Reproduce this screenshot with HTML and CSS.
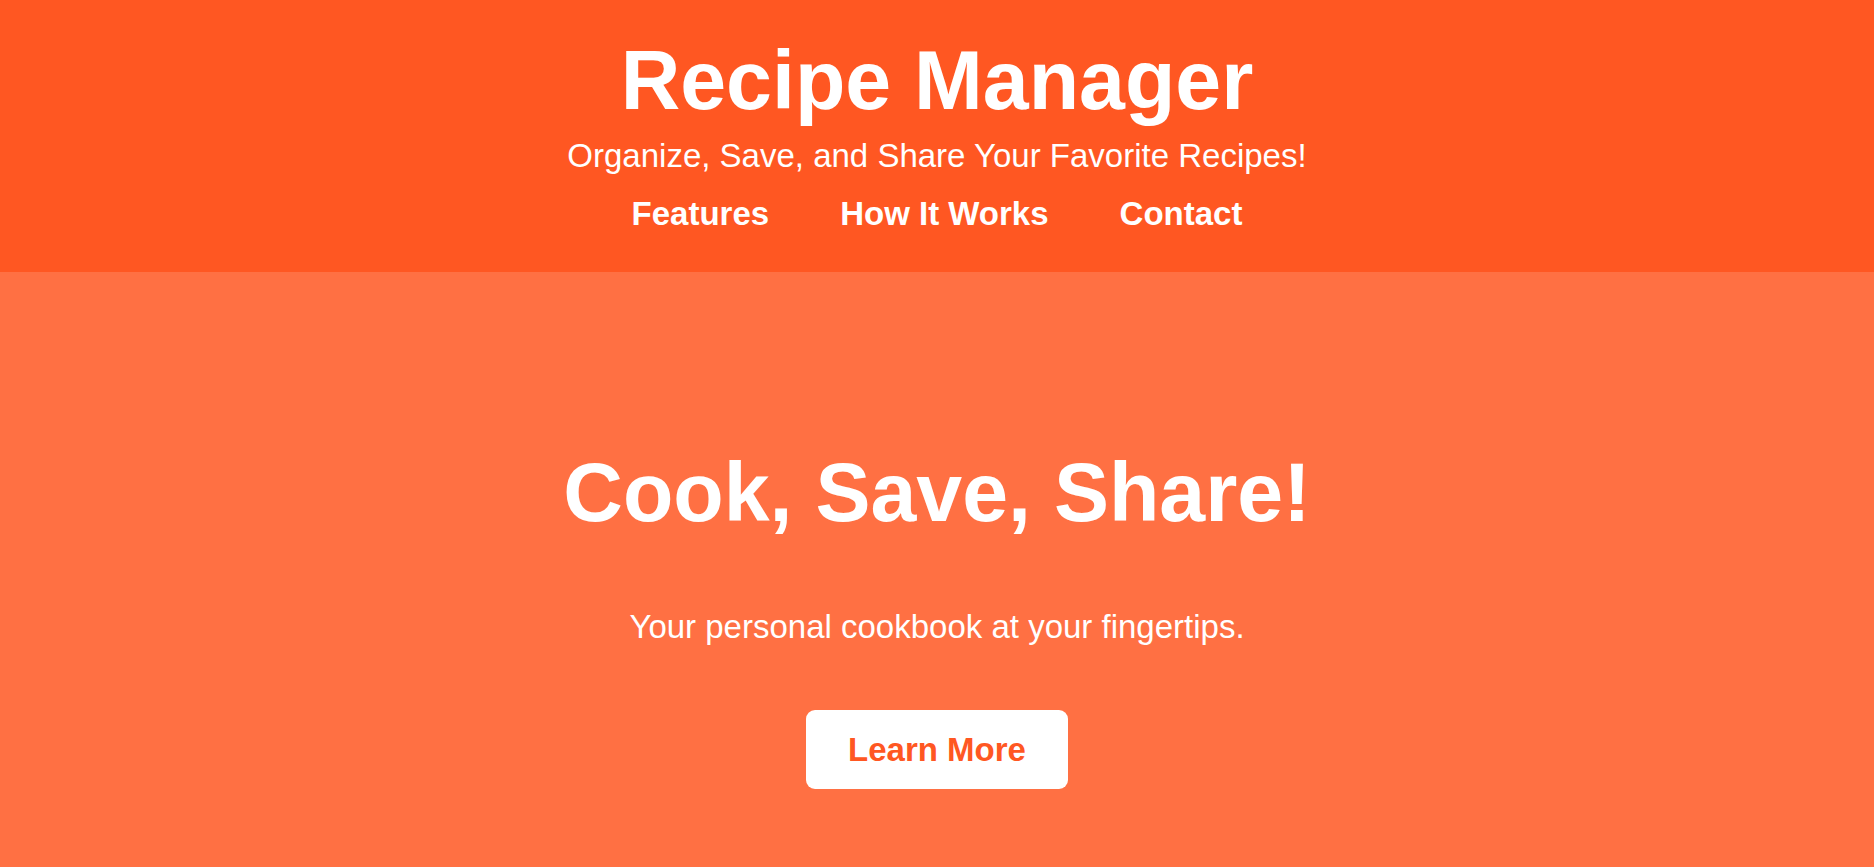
FILE: index.html
```html
<!DOCTYPE html>
<html lang="en">
<head>
<meta charset="utf-8">
<title>Recipe Manager</title>
<link rel="stylesheet" href="styles.css">
</head>
<body>
<header class="site-header">
  <h1 class="site-title">Recipe Manager</h1>
  <p class="site-tagline">Organize, Save, and Share Your Favorite Recipes!</p>
  <nav class="site-nav">
    <a href="#features">Features</a>
    <a href="#how">How It Works</a>
    <a href="#contact">Contact</a>
  </nav>
</header>
<section class="hero">
  <h2 class="hero-title">Cook, Save, Share!</h2>
  <p class="hero-text">Your personal cookbook at your fingertips.</p>
  <a class="hero-button" href="#features">Learn More</a>
</section>
</body>
</html>
```

FILE: styles.css
```css
html, body {
  margin: 0;
  padding: 0;
}
body {
  font-family: "Liberation Sans", Arial, sans-serif;
  background: #FF7043;
  color: #fff;
}
.site-header {
  background: #FF5722;
  text-align: center;
  padding: 33px 20px 40px;
}
.site-title {
  margin: 0;
  font-size: 82.5px;
  line-height: 94px;
  font-weight: 700;
}
.site-tagline {
  margin: 10px 0 0;
  font-size: 33px;
  line-height: 37px;
}
.site-nav {
  margin-top: 21px;
  display: flex;
  justify-content: center;
  gap: 71px;
}
.site-nav a {
  color: #fff;
  text-decoration: none;
  font-weight: 700;
  font-size: 33px;
  line-height: 37px;
}
.hero {
  background: #FF7043;
  text-align: center;
  padding: 173px 20px 120px;
  display: flex;
  flex-direction: column;
  align-items: center;
}
.hero-title {
  margin: 0;
  font-size: 82.5px;
  line-height: 94px;
  font-weight: 700;
}
.hero-text {
  margin: 69px 0 0;
  font-size: 33px;
  line-height: 37px;
}
.hero-button {
  margin-top: 65px;
  display: inline-block;
  background: #fff;
  color: #FF5722;
  font-weight: 700;
  font-size: 33px;
  line-height: 37px;
  padding: 21px 42px;
  border-radius: 9px;
  text-decoration: none;
}
```
